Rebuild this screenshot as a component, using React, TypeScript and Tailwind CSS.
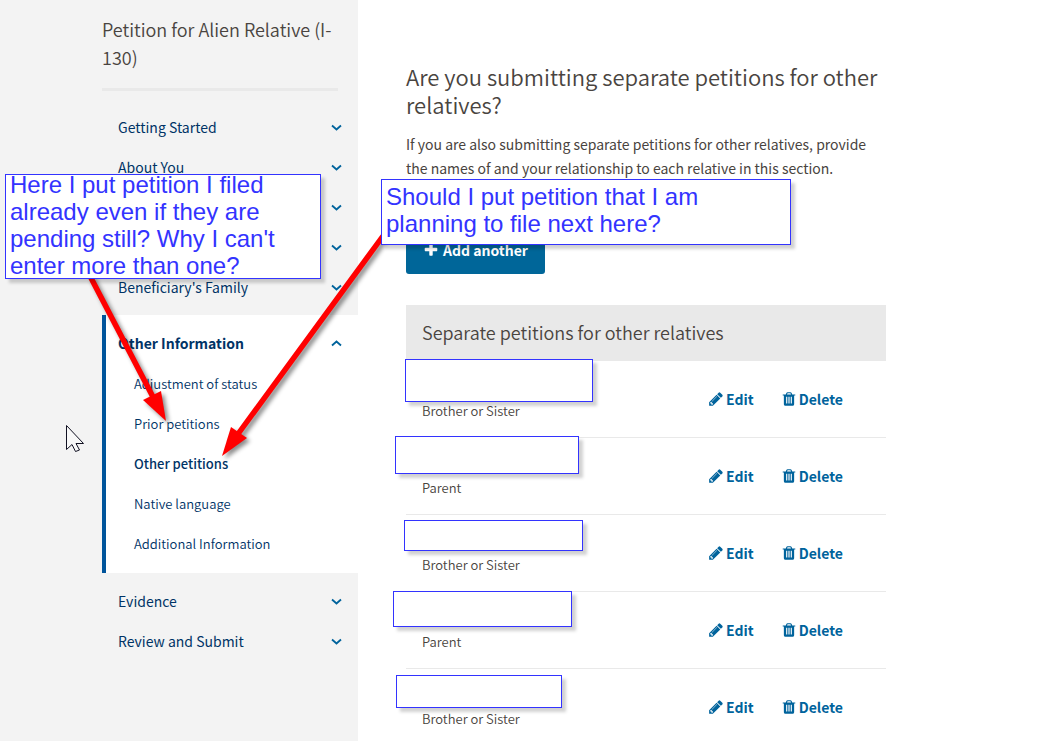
import { useState } from 'react';

const sections = [
  { id: 'start', label: 'Getting Started' },
  { id: 'you', label: 'About You' },
  { id: 'third', label: '' },
  { id: 'fourth', label: '' },
  { id: 'family', label: "Beneficiary's Family" },
  {
    id: 'other',
    label: 'Other Information',
    pages: [
      'Adjustment of status',
      'Prior petitions',
      'Other petitions',
      'Native language',
      'Additional Information',
    ],
  },
  { id: 'evidence', label: 'Evidence' },
  { id: 'review', label: 'Review and Submit' },
];

const relatives = ['Brother or Sister', 'Parent', 'Brother or Sister', 'Parent', 'Brother or Sister'];

const icons = {
  plus: 'M1600 736v192q0 40-28 68t-68 28h-416v416q0 40-28 68t-68 28h-192q-40 0-68-28t-28-68v-416h-416q-40 0-68-28t-28-68v-192q0-40 28-68t68-28h416v-416q0-40 28-68t68-28h192q40 0 68 28t28 68v416h416q40 0 68 28t28 68z',
  pencil:
    'M491 1536l91-91-235-235-91 91v107h128v128h107zm523-928q0-22-22-22-10 0-17 7l-542 542q-7 7-7 17 0 22 22 22 10 0 17-7l542-542q7-7 7-17zm-54-192l416 416-832 832h-416v-416zm683 96q0 53-37 90l-166 166-416-416 166-165q36-38 90-38 53 0 91 38l235 234q37 39 37 91z',
  trash:
    'M704 1376v-704q0-14-9-23t-23-9h-64q-14 0-23 9t-9 23v704q0 14 9 23t23 9h64q14 0 23-9t9-23zm256 0v-704q0-14-9-23t-23-9h-64q-14 0-23 9t-9 23v704q0 14 9 23t23 9h64q14 0 23-9t9-23zm256 0v-704q0-14-9-23t-23-9h-64q-14 0-23 9t-9 23v704q0 14 9 23t23 9h64q14 0 23-9t9-23zm-544-992h448l-48-117q-7-9-17-11h-317q-10 2-17 11zm928 32v64q0 14-9 23t-23 9h-96v948q0 83-47 143.5t-113 60.5h-832q-66 0-113-58.5t-47-141.5v-952h-96q-14 0-23-9t-9-23v-64q0-14 9-23t23-9h309l70-167q15-37 54-63t79-26h320q40 0 79 26t54 63l70 167h309q14 0 23 9t9 23z',
};

function Icon({ name }: { name: keyof typeof icons }) {
  return (
    <svg viewBox="0 0 1792 1792" className="h-4 w-4 shrink-0 fill-current" aria-hidden="true">
      <path d={icons[name]} />
    </svg>
  );
}

function Chevron({ up }: { up: boolean }) {
  return (
    <svg viewBox="0 0 12 12" className="h-3 w-3 fill-none stroke-[#00639c] stroke-[1.8]" aria-hidden="true">
      <path d={up ? 'M2 8.500L6.500 4.500L11 8.500' : 'M2 4.500L6.500 8.500L11 4.500'} />
    </svg>
  );
}

function Sidebar() {
  const [open, setOpen] = useState('other');

  return (
    <aside className="w-[358px] shrink-0 bg-[#f3f3f3] pl-[102px] text-[#003366]">
      <h2 className="mr-5 border-b-3 border-[#e9e9e9] pt-[15px] pb-[17px] text-[18px] leading-7 font-[350] text-[#494440]">
        Petition for Alien Relative (I-130)
      </h2>
      <nav className="pt-4">
        {sections.map((section, index) => {
          const active = open === section.id;
          return (
            <div key={section.id} className={active ? 'my-2 border-l-4 border-[#00549b] bg-white pt-2 pb-[9px]' : ''}>
              <button
                type="button"
                aria-label={section.label || `Section ${index + 1}`}
                aria-expanded={active}
                onClick={() => setOpen(section.id)}
                className={
                  active
                    ? 'flex h-10 w-full items-center justify-between pr-4 pl-3 text-left text-[14px] font-bold'
                    : 'flex h-10 w-full items-center justify-between px-4 text-left text-[14px]'
                }
              >
                <span>{section.label}</span>
                <Chevron up={active} />
              </button>
              {active && section.pages ? (
                <ul className="pt-px">
                  {section.pages.map((page) => (
                    <li key={page}>
                      <a
                        href="#"
                        className={
                          page === 'Other petitions'
                            ? 'flex h-10 items-center pl-7 text-[13px] font-medium'
                            : 'flex h-10 items-center pl-7 text-[13px] font-[350]'
                        }
                      >
                        {page}
                      </a>
                    </li>
                  ))}
                </ul>
              ) : null}
            </div>
          );
        })}
      </nav>
    </aside>
  );
}

function RelativeRow({ relation }: { relation: string }) {
  return (
    <li className="flex items-center border-b border-[#e9e9e9] py-[14px] pr-[43px] pl-4 last:border-0">
      <div className="flex-1 pt-6 text-[13px] leading-6 font-[350]">{relation}</div>
      <div className="flex gap-[27px] text-[14px] font-bold text-[#00639c]">
        <button type="button" className="flex items-center gap-[2px]">
          <Icon name="pencil" />
          Edit
        </button>
        <button type="button" className="flex items-center gap-[2px]">
          <Icon name="trash" />
          Delete
        </button>
      </div>
    </li>
  );
}

function Note({ className, children }: { className: string; children?: React.ReactNode }) {
  return (
    <div
      className={`absolute flex items-center border border-[#3333ff] bg-white px-1 pb-1 font-['Liberation_Sans',sans-serif] text-[24px] leading-[27px] text-[#3333ff] shadow-[4px_4px_3px_rgba(0,0,0,0.18)] ${className}`}
    >
      {children}
    </div>
  );
}

function Annotations() {
  return (
    <>
      <svg
        className="pointer-events-none absolute top-0 left-0 h-[480px] w-[400px]"
        viewBox="0 0 400 480"
        aria-hidden="true"
      >
        <g className="fill-[#ff0000] stroke-[#ff0000] drop-shadow-[3px_3px_2px_rgba(0,0,0,0.45)]">
          <path d="M90 276L153 397M383 236L238 434" strokeWidth="5.5" />
          <path stroke="none" d="M166 421L143 400L161 391Z" />
          <path stroke="none" d="M222 456L231 427L247 438Z" />
        </g>
        <path
          className="fill-[#f8f8f8] stroke-[#111122]"
          d="M66.500 425.500V449.500L72 444.500L75.500 451.500L79.500 450L76 443.500H83.500Z"
        />
      </svg>
      <Note className="top-[174px] left-[5px] h-[105px] w-[316px]">
        Here I put petition I filed already even if they are pending still? Why I can't enter more than one?
      </Note>
      <Note className="top-[179px] left-[381px] h-[66px] w-[410px] pr-20">
        Should I put petition that I am planning to file next here?
      </Note>
      <Note className="top-[359px] left-[405px] h-[43px] w-[188px]" />
      <Note className="top-[436px] left-[395px] h-[38px] w-[184px]" />
      <Note className="top-[520px] left-[404px] h-[31px] w-[179px]" />
      <Note className="top-[591px] left-[393px] h-[36px] w-[179px]" />
      <Note className="top-[675px] left-[396px] h-[33px] w-[166px]" />
    </>
  );
}

export default function App() {
  return (
    <div className="relative flex min-h-screen bg-white font-['Noto_Sans_CJK_SC',sans-serif] text-[#494440]">
      <Sidebar />
      <main className="flex-1 px-12 pt-[62px]">
        <div className="max-w-[480px]">
          <h1 className="text-[22px] leading-7 font-[350]">
            Are you submitting separate petitions for other relatives?
          </h1>
          <p className="mt-[14px] text-[14px] leading-6">
            If you are also submitting separate petitions for other relatives, provide the names of and your
            relationship to each relative in this section.
          </p>
          <button
            type="button"
            className="mt-[46px] flex h-12 items-center gap-1 rounded-[3px] bg-[#006699] px-[17px] text-[14px] font-bold text-white"
          >
            <Icon name="plus" />
            Add another
          </button>
          <section className="mt-[31px]">
            <h2 className="bg-[#e9e9e9] px-4 pt-[13px] pb-[15px] text-[18px] leading-7 font-[350]">
              Separate petitions for other relatives
            </h2>
            <ul>
              {relatives.map((relation, index) => (
                <RelativeRow key={index} relation={relation} />
              ))}
            </ul>
          </section>
        </div>
      </main>
      <Annotations />
    </div>
  );
}
